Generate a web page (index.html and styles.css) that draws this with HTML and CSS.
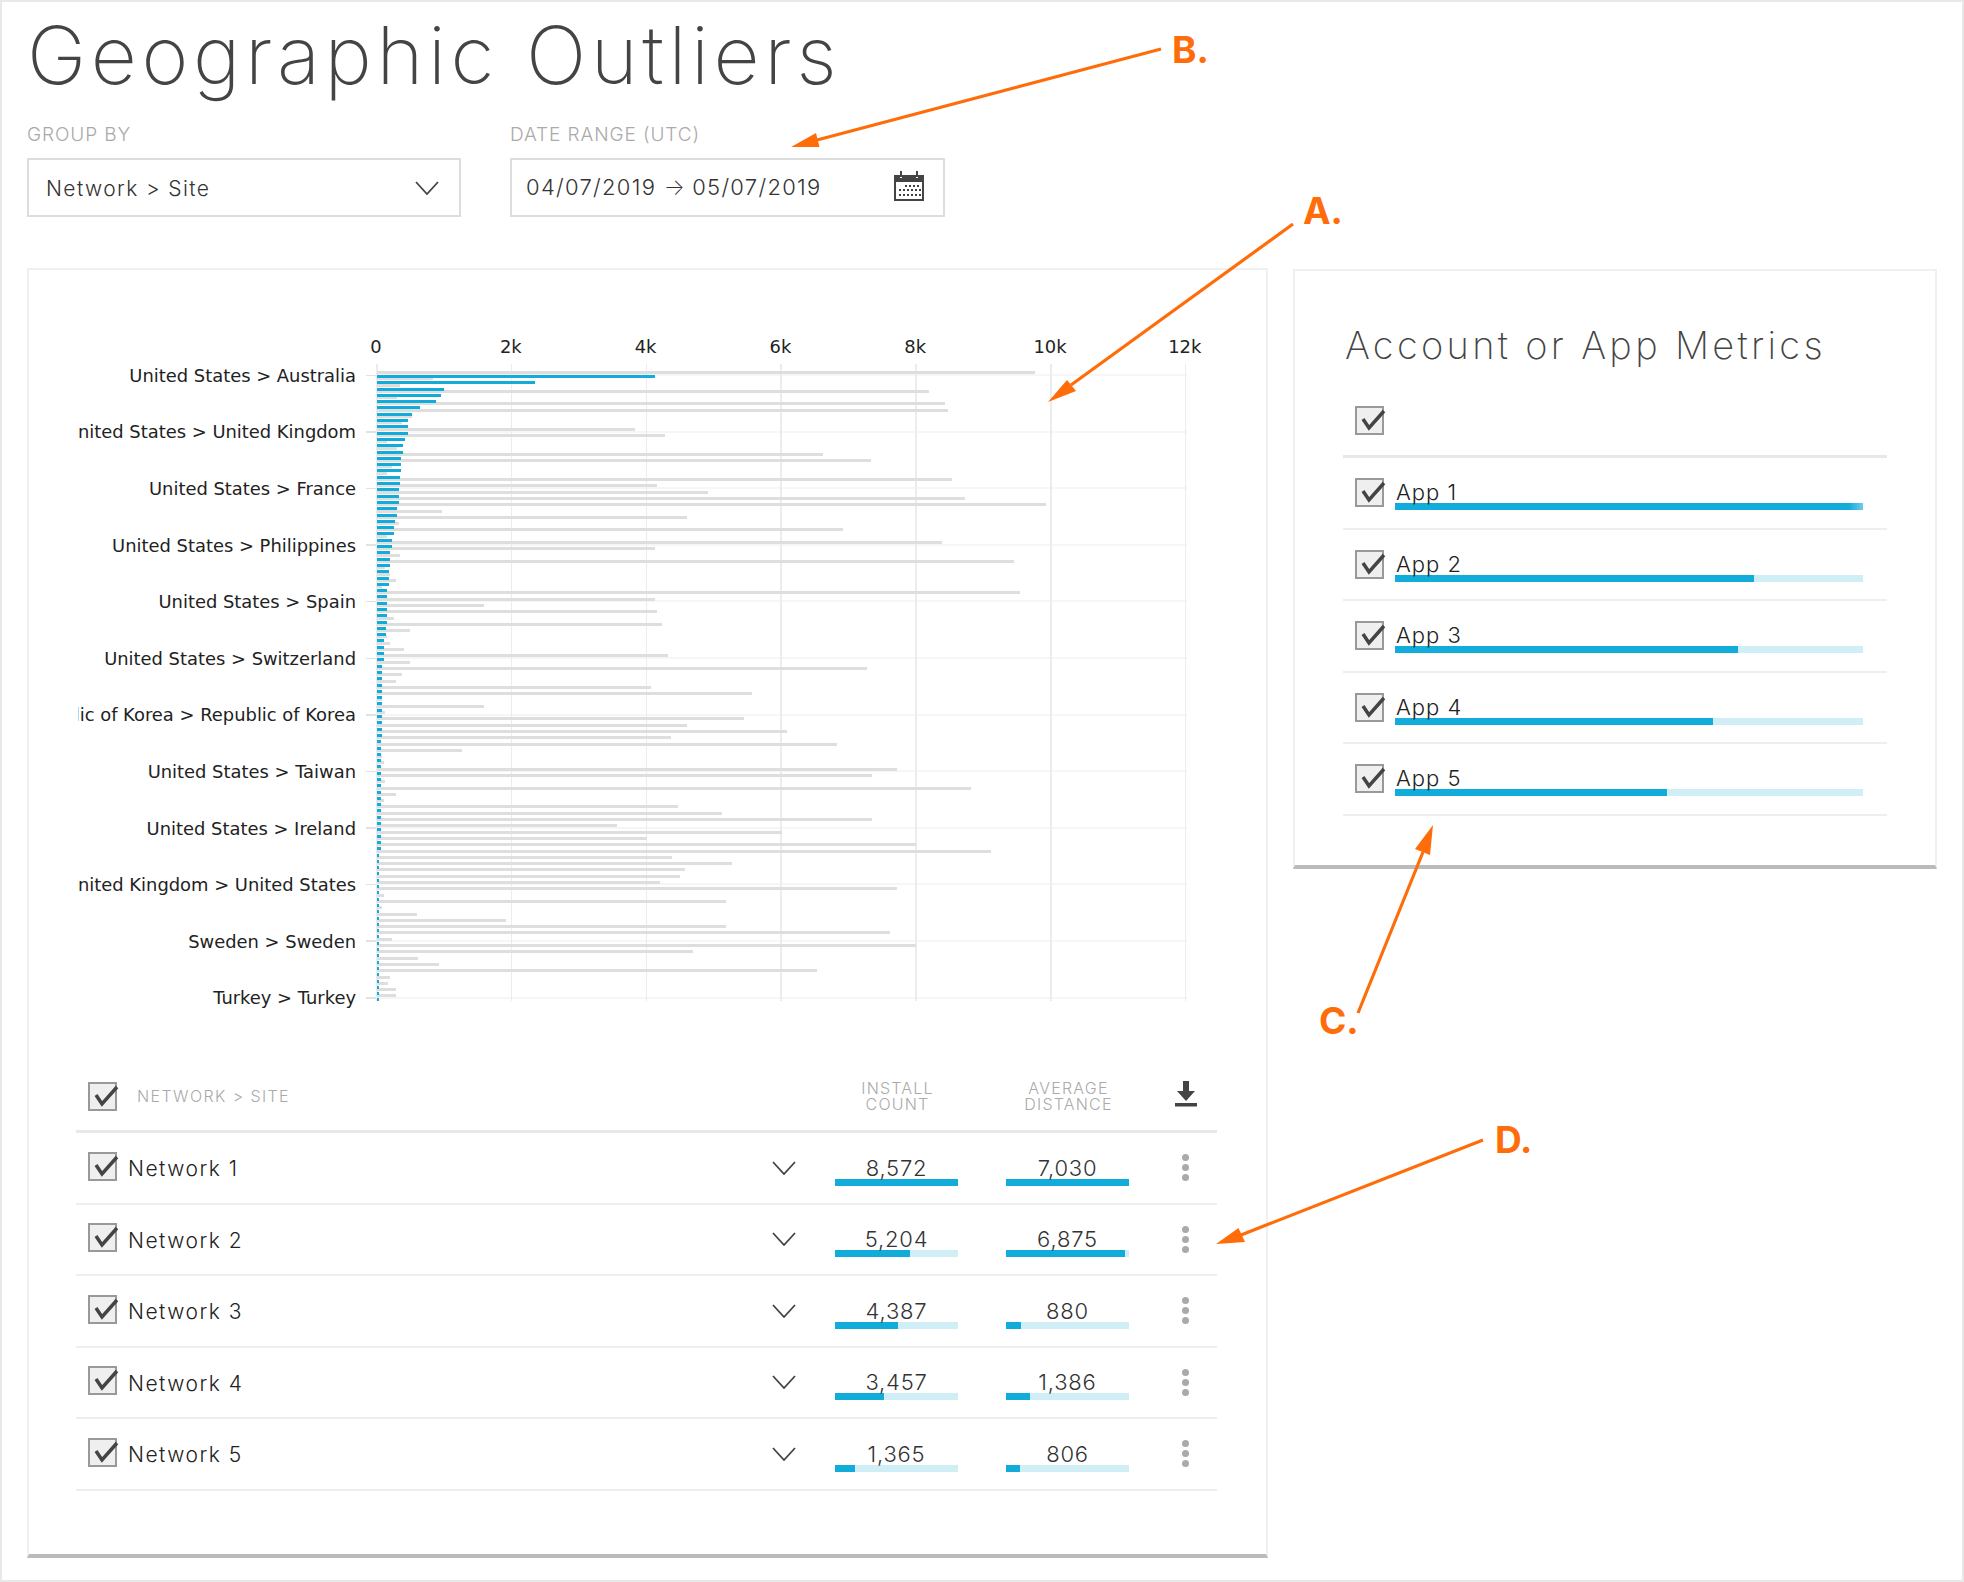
FILE: index.html
```html
<!DOCTYPE html>
<html lang="en">
<head>
<meta charset="utf-8">
<title>Geographic Outliers</title>
<link rel="stylesheet" href="styles.css">
</head>
<body>
<div class="frame">
  <h1 class="page-title">Geographic Outliers</h1>
  <div class="filters">
    <div class="field">
      <div class="field-label">GROUP BY</div>
      <div class="field-box select-box">
        <span>Network &gt; Site</span>
        <svg class="chev" width="24" height="14" viewBox="0 0 24 14"><path d="M1 1l11 12L23 1" /></svg>
      </div>
    </div>
    <div class="field">
      <div class="field-label">DATE RANGE (UTC)</div>
      <div class="field-box date-box">
        <span>04/07/2019 <span class="arrow">→</span> 05/07/2019</span>
        <svg class="cal" width="30" height="30" viewBox="0 0 30 30">
          <path class="cal-body" d="M1 5h28v24H1z"/>
          <path class="cal-head" d="M1 4h5v3h2V4h14v3h2V4h5v7H1z"/>
          <path class="cal-ring" d="M7 0v6M23 0v6"/>
          <path class="cal-dots" d="M11 14h2v2h-2zM15 14h2v2h-2zM19 14h2v2h-2zM23 14h2v2h-2zM5 18h2v2H5zM9 18h2v2H9zM13 18h2v2h-2zM17 18h2v2h-2zM21 18h2v2h-2zM25 18h2v2h-2zM5 23h2v2H5zM9 23h2v2H9zM13 23h2v2h-2zM17 23h2v2h-2zM21 23h2v2h-2zM25 23h2v2h-2z"/>
        </svg>
      </div>
    </div>
  </div>

  <div class="panels">
    <section class="panel panel-main">
      <div class="chart">
        <div class="labels">
          <div class="label"><span>United States &gt; Australia</span></div>
          <div class="label"><span>United States &gt; United Kingdom</span></div>
          <div class="label"><span>United States &gt; France</span></div>
          <div class="label"><span>United States &gt; Philippines</span></div>
          <div class="label"><span>United States &gt; Spain</span></div>
          <div class="label"><span>United States &gt; Switzerland</span></div>
          <div class="label"><span>Republic of Korea &gt; Republic of Korea</span></div>
          <div class="label"><span>United States &gt; Taiwan</span></div>
          <div class="label"><span>United States &gt; Ireland</span></div>
          <div class="label"><span>United Kingdom &gt; United States</span></div>
          <div class="label"><span>Sweden &gt; Sweden</span></div>
          <div class="label"><span>Turkey &gt; Turkey</span></div>
        </div>
        <div class="axis">
          <span>0</span><span>2k</span><span>4k</span><span>6k</span><span>8k</span><span>10k</span><span>12k</span>
        </div>
        <div class="plot">
          <div class="r"><i class="g" style="width:658px"></i><i class="b" style="width:278px"></i></div>
          <div class="r"><i class="g" style="width:56px"></i><i class="b" style="width:158px"></i></div>
          <div class="r"><i class="g" style="width:23px"></i><i class="b" style="width:67px"></i></div>
          <div class="r"><i class="g" style="width:552px"></i><i class="b" style="width:64px"></i></div>
          <div class="r"><i class="g" style="width:20px"></i><i class="b" style="width:59px"></i></div>
          <div class="r"><i class="g" style="width:568px"></i><i class="b" style="width:43px"></i></div>
          <div class="r"><i class="g" style="width:571px"></i><i class="b" style="width:35px"></i></div>
          <div class="r"><i class="g" style="width:35px"></i><i class="b" style="width:31px"></i></div>
          <div class="r"><i class="g" style="width:25px"></i><i class="b" style="width:31px"></i></div>
          <div class="r"><i class="g" style="width:258px"></i><i class="b" style="width:31px"></i></div>
          <div class="r"><i class="g" style="width:288px"></i><i class="b" style="width:28px"></i></div>
          <div class="r"><i class="g" style="width:10px"></i><i class="b" style="width:26px"></i></div>
          <div class="r"><i class="g" style="width:20px"></i><i class="b" style="width:26px"></i></div>
          <div class="r"><i class="g" style="width:446px"></i><i class="b" style="width:24px"></i></div>
          <div class="r"><i class="g" style="width:494px"></i><i class="b" style="width:24px"></i></div>
          <div class="r"><i class="g" style="width:15px"></i><i class="b" style="width:24px"></i></div>
          <div class="r"><i class="g" style="width:10px"></i><i class="b" style="width:23px"></i></div>
          <div class="r"><i class="g" style="width:575px"></i><i class="b" style="width:23px"></i></div>
          <div class="r"><i class="g" style="width:280px"></i><i class="b" style="width:22px"></i></div>
          <div class="r"><i class="g" style="width:331px"></i><i class="b" style="width:22px"></i></div>
          <div class="r"><i class="g" style="width:588px"></i><i class="b" style="width:22px"></i></div>
          <div class="r"><i class="g" style="width:669px"></i><i class="b" style="width:20px"></i></div>
          <div class="r"><i class="g" style="width:65px"></i><i class="b" style="width:20px"></i></div>
          <div class="r"><i class="g" style="width:310px"></i><i class="b" style="width:18px"></i></div>
          <div class="r"><i class="g" style="width:22px"></i><i class="b" style="width:17px"></i></div>
          <div class="r"><i class="g" style="width:466px"></i><i class="b" style="width:17px"></i></div>
          <div class="r"><i class="g" style="width:10px"></i><i class="b" style="width:15px"></i></div>
          <div class="r"><i class="g" style="width:565px"></i><i class="b" style="width:15px"></i></div>
          <div class="r"><i class="g" style="width:278px"></i><i class="b" style="width:13px"></i></div>
          <div class="r"><i class="g" style="width:23px"></i><i class="b" style="width:13px"></i></div>
          <div class="r"><i class="g" style="width:637px"></i><i class="b" style="width:13px"></i></div>
          <div class="r"><i class="g" style="width:8px"></i><i class="b" style="width:12px"></i></div>
          <div class="r"><i class="g" style="width:13px"></i><i class="b" style="width:12px"></i></div>
          <div class="r"><i class="g" style="width:19px"></i><i class="b" style="width:12px"></i></div>
          <div class="r"><i class="g" style="width:5px"></i><i class="b" style="width:10px"></i></div>
          <div class="r"><i class="g" style="width:643px"></i><i class="b" style="width:10px"></i></div>
          <div class="r"><i class="g" style="width:278px"></i><i class="b" style="width:10px"></i></div>
          <div class="r"><i class="g" style="width:107px"></i><i class="b" style="width:10px"></i></div>
          <div class="r"><i class="g" style="width:280px"></i><i class="b" style="width:10px"></i></div>
          <div class="r"><i class="g" style="width:17px"></i><i class="b" style="width:10px"></i></div>
          <div class="r"><i class="g" style="width:285px"></i><i class="b" style="width:9px"></i></div>
          <div class="r"><i class="g" style="width:33px"></i><i class="b" style="width:9px"></i></div>
          <div class="r"><i class="g" style="width:10px"></i><i class="b" style="width:7px"></i></div>
          <div class="r"><i class="g" style="width:13px"></i><i class="b" style="width:7px"></i></div>
          <div class="r"><i class="g" style="width:27px"></i><i class="b" style="width:7px"></i></div>
          <div class="r"><i class="g" style="width:291px"></i><i class="b" style="width:7px"></i></div>
          <div class="r"><i class="g" style="width:33px"></i><i class="b" style="width:5px"></i></div>
          <div class="r"><i class="g" style="width:490px"></i><i class="b" style="width:5px"></i></div>
          <div class="r"><i class="g" style="width:25px"></i><i class="b" style="width:5px"></i></div>
          <div class="r"><i class="g" style="width:19px"></i><i class="b" style="width:5px"></i></div>
          <div class="r"><i class="g" style="width:274px"></i><i class="b" style="width:5px"></i></div>
          <div class="r"><i class="g" style="width:375px"></i><i class="b" style="width:5px"></i></div>
          <div class="r"><i class="g" style="width:5px"></i><i class="b" style="width:5px"></i></div>
          <div class="r"><i class="g" style="width:107px"></i><i class="b" style="width:5px"></i></div>
          <div class="r"><i class="g" style="width:8px"></i><i class="b" style="width:5px"></i></div>
          <div class="r"><i class="g" style="width:367px"></i><i class="b" style="width:5px"></i></div>
          <div class="r"><i class="g" style="width:310px"></i><i class="b" style="width:5px"></i></div>
          <div class="r"><i class="g" style="width:410px"></i><i class="b" style="width:5px"></i></div>
          <div class="r"><i class="g" style="width:294px"></i><i class="b" style="width:4px"></i></div>
          <div class="r"><i class="g" style="width:460px"></i><i class="b" style="width:4px"></i></div>
          <div class="r"><i class="g" style="width:85px"></i><i class="b" style="width:4px"></i></div>
          <div class="r"><i class="g" style="width:5px"></i><i class="b" style="width:4px"></i></div>
          <div class="r"><i class="g" style="width:7px"></i><i class="b" style="width:4px"></i></div>
          <div class="r"><i class="g" style="width:520px"></i><i class="b" style="width:4px"></i></div>
          <div class="r"><i class="g" style="width:495px"></i><i class="b" style="width:4px"></i></div>
          <div class="r"><i class="g" style="width:8px"></i><i class="b" style="width:4px"></i></div>
          <div class="r"><i class="g" style="width:594px"></i><i class="b" style="width:4px"></i></div>
          <div class="r"><i class="g" style="width:19px"></i><i class="b" style="width:4px"></i></div>
          <div class="r"><i class="g" style="width:7px"></i><i class="b" style="width:4px"></i></div>
          <div class="r"><i class="g" style="width:301px"></i><i class="b" style="width:4px"></i></div>
          <div class="r"><i class="g" style="width:345px"></i><i class="b" style="width:4px"></i></div>
          <div class="r"><i class="g" style="width:495px"></i><i class="b" style="width:4px"></i></div>
          <div class="r"><i class="g" style="width:240px"></i><i class="b" style="width:4px"></i></div>
          <div class="r"><i class="g" style="width:405px"></i><i class="b" style="width:4px"></i></div>
          <div class="r"><i class="g" style="width:270px"></i><i class="b" style="width:4px"></i></div>
          <div class="r"><i class="g" style="width:539px"></i><i class="b" style="width:4px"></i></div>
          <div class="r"><i class="g" style="width:614px"></i><i class="b" style="width:2px"></i></div>
          <div class="r"><i class="g" style="width:295px"></i><i class="b" style="width:2px"></i></div>
          <div class="r"><i class="g" style="width:355px"></i><i class="b" style="width:2px"></i></div>
          <div class="r"><i class="g" style="width:308px"></i><i class="b" style="width:2px"></i></div>
          <div class="r"><i class="g" style="width:303px"></i><i class="b" style="width:2px"></i></div>
          <div class="r"><i class="g" style="width:283px"></i><i class="b" style="width:2px"></i></div>
          <div class="r"><i class="g" style="width:520px"></i><i class="b" style="width:2px"></i></div>
          <div class="r"><i class="g" style="width:7px"></i><i class="b" style="width:2px"></i></div>
          <div class="r"><i class="g" style="width:349px"></i><i class="b" style="width:2px"></i></div>
          <div class="r"><i class="g" style="width:5px"></i><i class="b" style="width:2px"></i></div>
          <div class="r"><i class="g" style="width:40px"></i><i class="b" style="width:2px"></i></div>
          <div class="r"><i class="g" style="width:129px"></i><i class="b" style="width:2px"></i></div>
          <div class="r"><i class="g" style="width:349px"></i><i class="b" style="width:2px"></i></div>
          <div class="r"><i class="g" style="width:513px"></i><i class="b" style="width:2px"></i></div>
          <div class="r"><i class="g" style="width:15px"></i><i class="b" style="width:2px"></i></div>
          <div class="r"><i class="g" style="width:539px"></i><i class="b" style="width:2px"></i></div>
          <div class="r"><i class="g" style="width:316px"></i><i class="b" style="width:2px"></i></div>
          <div class="r"><i class="g" style="width:41px"></i><i class="b" style="width:2px"></i></div>
          <div class="r"><i class="g" style="width:62px"></i><i class="b" style="width:2px"></i></div>
          <div class="r"><i class="g" style="width:440px"></i><i class="b" style="width:2px"></i></div>
          <div class="r"><i class="g" style="width:13px"></i><i class="b" style="width:2px"></i></div>
          <div class="r"><i class="g" style="width:11px"></i><i class="b" style="width:2px"></i></div>
          <div class="r"><i class="g" style="width:19px"></i><i class="b" style="width:2px"></i></div>
          <div class="r"><i class="g" style="width:19px"></i><i class="b" style="width:2px"></i></div>
        </div>
      </div>

      <div class="table">
        <div class="thead">
          <span class="check"><svg viewBox="0 0 29 29"><path d="M8 13l6 9L29 5"/></svg></span>
          <span class="thead-name">NETWORK &gt; SITE</span>
          <span class="metric-head">INSTALL<br>COUNT</span>
          <span class="metric-head">AVERAGE<br>DISTANCE</span>
          <svg class="download" width="22" height="26" viewBox="0 0 22 26"><path d="M8 0h6v10h6l-9 10L2 10h6zM0 22h22v3.500H0z"/></svg>
        </div>
        <div class="trow">
          <span class="check"><svg viewBox="0 0 29 29"><path d="M8 13l6 9L29 5"/></svg></span>
          <span class="name">Network 1</span>
          <svg class="chev chev-row" width="24" height="14" viewBox="0 0 24 14"><path d="M1 1l11 12L23 1" /></svg>
          <div class="metric"><span>8,572</span><div class="bar"><div class="fill" style="width:100%"></div></div></div>
          <div class="metric"><span>7,030</span><div class="bar"><div class="fill" style="width:100%"></div></div></div>
          <div class="kebab"><i></i><i></i><i></i></div>
        </div>
        <div class="trow">
          <span class="check"><svg viewBox="0 0 29 29"><path d="M8 13l6 9L29 5"/></svg></span>
          <span class="name">Network 2</span>
          <svg class="chev chev-row" width="24" height="14" viewBox="0 0 24 14"><path d="M1 1l11 12L23 1" /></svg>
          <div class="metric"><span>5,204</span><div class="bar"><div class="fill" style="width:60.700%"></div></div></div>
          <div class="metric"><span>6,875</span><div class="bar"><div class="fill" style="width:97%"></div></div></div>
          <div class="kebab"><i></i><i></i><i></i></div>
        </div>
        <div class="trow">
          <span class="check"><svg viewBox="0 0 29 29"><path d="M8 13l6 9L29 5"/></svg></span>
          <span class="name">Network 3</span>
          <svg class="chev chev-row" width="24" height="14" viewBox="0 0 24 14"><path d="M1 1l11 12L23 1" /></svg>
          <div class="metric"><span>4,387</span><div class="bar"><div class="fill" style="width:51%"></div></div></div>
          <div class="metric"><span>880</span><div class="bar"><div class="fill" style="width:12%"></div></div></div>
          <div class="kebab"><i></i><i></i><i></i></div>
        </div>
        <div class="trow">
          <span class="check"><svg viewBox="0 0 29 29"><path d="M8 13l6 9L29 5"/></svg></span>
          <span class="name">Network 4</span>
          <svg class="chev chev-row" width="24" height="14" viewBox="0 0 24 14"><path d="M1 1l11 12L23 1" /></svg>
          <div class="metric"><span>3,457</span><div class="bar"><div class="fill" style="width:40%"></div></div></div>
          <div class="metric"><span>1,386</span><div class="bar"><div class="fill" style="width:19.500%"></div></div></div>
          <div class="kebab"><i></i><i></i><i></i></div>
        </div>
        <div class="trow">
          <span class="check"><svg viewBox="0 0 29 29"><path d="M8 13l6 9L29 5"/></svg></span>
          <span class="name">Network 5</span>
          <svg class="chev chev-row" width="24" height="14" viewBox="0 0 24 14"><path d="M1 1l11 12L23 1" /></svg>
          <div class="metric"><span>1,365</span><div class="bar"><div class="fill" style="width:16%"></div></div></div>
          <div class="metric"><span>806</span><div class="bar"><div class="fill" style="width:11.300%"></div></div></div>
          <div class="kebab"><i></i><i></i><i></i></div>
        </div>
      </div>
    </section>

    <section class="panel panel-side">
      <h2 class="side-title">Account or App Metrics</h2>
      <div class="apps">
        <div class="apps-head">
          <span class="check"><svg viewBox="0 0 29 29"><path d="M8 13l6 9L29 5"/></svg></span>
        </div>
        <div class="app">
          <span class="check"><svg viewBox="0 0 29 29"><path d="M8 13l6 9L29 5"/></svg></span>
          <div class="app-body"><div class="app-name">App 1</div><div class="bar"><div class="fill fill-fade" style="width:100%"></div></div></div>
        </div>
        <div class="app">
          <span class="check"><svg viewBox="0 0 29 29"><path d="M8 13l6 9L29 5"/></svg></span>
          <div class="app-body"><div class="app-name">App 2</div><div class="bar"><div class="fill" style="width:76.800%"></div></div></div>
        </div>
        <div class="app">
          <span class="check"><svg viewBox="0 0 29 29"><path d="M8 13l6 9L29 5"/></svg></span>
          <div class="app-body"><div class="app-name">App 3</div><div class="bar"><div class="fill" style="width:73.300%"></div></div></div>
        </div>
        <div class="app">
          <span class="check"><svg viewBox="0 0 29 29"><path d="M8 13l6 9L29 5"/></svg></span>
          <div class="app-body"><div class="app-name">App 4</div><div class="bar"><div class="fill" style="width:68%"></div></div></div>
        </div>
        <div class="app">
          <span class="check"><svg viewBox="0 0 29 29"><path d="M8 13l6 9L29 5"/></svg></span>
          <div class="app-body"><div class="app-name">App 5</div><div class="bar"><div class="fill" style="width:58.200%"></div></div></div>
        </div>
      </div>
    </section>
  </div>

  <svg class="notes" width="1964" height="1582" viewBox="0 0 1964 1582">
    <path class="note-line" d="M1293 224L1071 385M1161 49L817 140M1358 1013L1423 852M1483 1140L1241 1235"/>
    <path class="note-head" d="M1048 402L1067 380L1076 391zM791 147L816 133L819.500 147zM1433 825L1415 849L1430 855zM1216 1244L1238.500 1228L1245 1242z"/>
    <text class="note-text" x="1303" y="224">A.</text>
    <text class="note-text" x="1172" y="63">B.</text>
    <text class="note-text" x="1319" y="1034">C.</text>
    <text class="note-text" x="1495" y="1153">D.</text>
  </svg>
</div>
</body>
</html>
```

FILE: styles.css
```css
* { box-sizing: border-box; }
html, body { margin: 0; padding: 0; background: #fff; }
body { font-family: "Inter", "Liberation Sans", sans-serif; color: #333; }

.frame {
  position: relative;
  width: 1964px;
  height: 1582px;
  padding: 0 25px;
  border: 2px solid #e8e8e8;
  overflow: hidden;
}

.page-title {
  margin: 0;
  height: 106px;
  font-size: 80px;
  line-height: 106px;
  font-weight: 200;
  letter-spacing: 4.600px;
  color: #444;
}

.filters { display: flex; gap: 49px; }
.field { width: 434px; }
.field:last-child { width: 435px; }
.field-label {
  height: 50px;
  padding-top: 16px;
  font-size: 19px;
  line-height: 22px;
  font-weight: 300;
  letter-spacing: 0.900px;
  color: #aaa;
}
.field-box {
  height: 59px;
  display: flex;
  align-items: center;
  justify-content: space-between;
  border: 2px solid #ddd;
  font-size: 21px;
  font-weight: 300;
  letter-spacing: 1.400px;
  color: #333;
}
.select-box { padding: 0 20px 0 17px; }
.select-box span { margin-top: 2px; }
.date-box { padding: 0 19px 0 14px; font-size: 22px; letter-spacing: 1.300px; }
.date-box > span { margin-top: -2px; }
.arrow { font-size: 22px; font-weight: 200; letter-spacing: 0; }
.cal { margin-top: -4px; }

.chev path { fill: none; stroke: #444; stroke-width: 1.800; }
.cal-body { fill: #fff; stroke: #444; stroke-width: 2; }
.cal-head { fill: #444; }
.cal-ring { fill: none; stroke: #444; stroke-width: 2; }
.cal-dots { fill: #444; }

.panels { display: flex; gap: 25px; margin-top: 51px; align-items: flex-start; }
.panel {
  background: #fff;
  border: 2px solid #f0f0f0;
  border-bottom: 4px solid #bbb;
}
.panel-main { width: 1241px; height: 1290px; padding-top: 63px; }
.panel-side { width: 644px; height: 600px; margin-top: 1px; padding-top: 50px; }

/* chart */
.chart {
  display: grid;
  grid-template-columns: 298px 811px;
  grid-template-rows: 31px 637px;
  margin-left: 49px;
  font-family: "DejaVu Sans", sans-serif;
  font-size: 17.900px;
  color: #222;
}
.labels {
  grid-column: 1;
  grid-row: 1 / 3;
  padding-top: 14px;
  display: flex;
  flex-direction: column;
}
.label {
  height: 56.600px;
  flex: none;
  display: flex;
  align-items: center;
}
.label span {
  flex: 1;
  min-width: 0;
  display: flex;
  justify-content: flex-end;
  overflow: hidden;
  white-space: nowrap;
}
.label::after {
  content: "";
  width: 10px;
  height: 1.500px;
  margin-left: 10px;
  background: #e2e2e2;
}
.axis {
  grid-column: 2;
  grid-row: 1;
  display: flex;
  margin-left: -67.400px;
  margin-top: 2px;
  line-height: 24px;
}
.axis span { width: 134.800px; flex: none; text-align: center; }
.plot {
  grid-column: 2;
  grid-row: 2;
  padding: 7px 0 0 1px;
  background-image:
    repeating-linear-gradient(to right, #ececec 0 1.500px, transparent 1.500px 134.800px),
    repeating-linear-gradient(to bottom, transparent 0 10px, #f6f6f6 10px 12px, transparent 12px 56.600px);
}
.r {
  height: 6.300px;
  display: flex;
  flex-direction: column;
  gap: 1px;
}
.r i { display: block; flex: none; height: 3px; }
.g { background: #dedede; }
.b { position: relative; z-index: 1; background: #12acdb; }

/* table */
.table { width: 1141px; margin: 59px 0 0 47px; }
.thead {
  display: flex;
  align-items: center;
  height: 73px;
  padding: 2px 20px 0 12px;
  border-bottom: 3px solid #e8e8e8;
}
.thead-name {
  flex: 1;
  margin-left: 20px;
  font-size: 16px;
  font-weight: 300;
  letter-spacing: 1.400px;
  color: #aaa;
}
.metric-head {
  width: 123px;
  margin-left: 48px;
  padding-left: 4px;
  text-align: center;
  font-size: 16px;
  line-height: 16px;
  font-weight: 300;
  letter-spacing: 1.200px;
  color: #aaa;
}
.download { margin-left: 47px; width: 22px; height: 26px; fill: #444; margin-top: -4px; }

.check {
  flex: none;
  display: block;
  width: 29px;
  height: 29px;
  background: #efefef;
  border: 2px solid #999;
}
.check svg { display: block; width: 29px; height: 29px; margin: -2px; overflow: visible; }
.check path { fill: none; stroke: #444; stroke-width: 3.500; }

.trow {
  display: flex;
  align-items: center;
  height: 71.500px;
  padding: 0 28px 0 12px;
  border-bottom: 2px solid #eee;
}
.trow .check { margin-top: -3px; }
.name { flex: 1; margin: 2px 0 0 11px; font-size: 21px; font-weight: 300; letter-spacing: 1.500px; color: #222; }
.chev-row { margin-right: 39px; }
.metric {
  width: 123px;
  height: 30px;
  margin-top: 6px;
  text-align: center;
  font-size: 22px;
  line-height: 24px;
  font-weight: 300;
  letter-spacing: 0.800px;
  color: #333;
}
.metric + .metric { margin-left: 48px; }
.metric span { display: block; height: 23px; }
.bar { height: 7px; background: #cfeef6; }
.fill { height: 100%; background: #12acdb; }
.fill-fade { background: linear-gradient(to right, #12acdb 97%, #6fcbe8); }
.kebab {
  width: 7px;
  margin-left: 53px;
  display: flex;
  flex-direction: column;
  gap: 3px;
}
.kebab i { display: block; width: 7px; height: 7px; border-radius: 50%; background: #aaa; }

/* side panel */
.side-title {
  margin: 0 0 0 50px;
  height: 48px;
  font-size: 38px;
  line-height: 48px;
  font-weight: 200;
  letter-spacing: 3.300px;
  color: #444;
}
.apps { width: 544px; margin-left: 48px; }
.apps-head {
  height: 89px;
  padding: 37px 0 0 12px;
  border-bottom: 3px solid #e8e8e8;
}
.app {
  display: flex;
  align-items: flex-start;
  height: 71.600px;
  padding: 20px 24px 0 12px;
  border-bottom: 2px solid #eee;
}
.app-body { flex: 1; margin-left: 11px; }
.app-name {
  height: 25px;
  padding-left: 1px;
  font-size: 22px;
  line-height: 28px;
  font-weight: 300;
  letter-spacing: 1px;
  color: #222;
}

/* annotations */
.notes { position: absolute; left: -2px; top: -2px; pointer-events: none; }
.note-line { fill: none; stroke: #ff6c0a; stroke-width: 3.200; }
.note-head { fill: #ff6c0a; }
.note-text { font-family: "Inter", sans-serif; font-size: 37px; font-weight: 700; fill: #ff6c0a; }
```
